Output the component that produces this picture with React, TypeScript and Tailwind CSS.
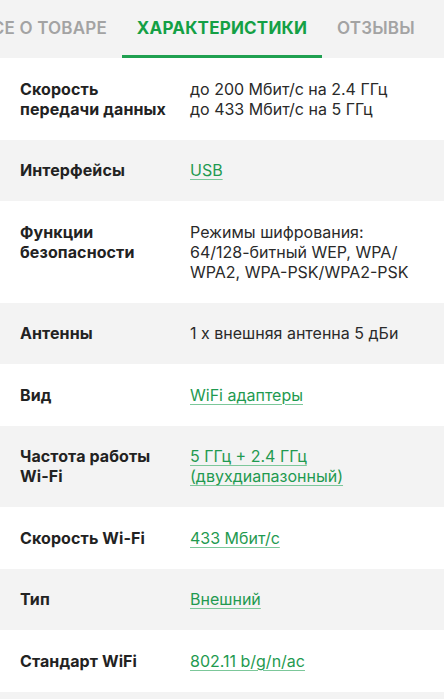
import React from "react";

type Row = { label: string[]; value: string[]; link?: boolean };

const rows: Row[] = [
  { label: ["Скорость", "передачи данных"], value: ["до 200 Мбит/с на 2.4 ГГц", "до 433 Мбит/с на 5 ГГц"] },
  { label: ["Интерфейсы"], value: ["USB"], link: true },
  { label: ["Функции", "безопасности"], value: ["Режимы шифрования:", "64/128-битный WEP, WPA/", "WPA2, WPA-PSK/WPA2-PSK"] },
  { label: ["Антенны"], value: ["1 x внешняя антенна 5 дБи"] },
  { label: ["Вид"], value: ["WiFi адаптеры"], link: true },
  { label: ["Частота работы", "Wi-Fi"], value: ["5 ГГц + 2.4 ГГц", "(двухдиапазонный)"], link: true },
  { label: ["Скорость Wi-Fi"], value: ["433 Мбит/с"], link: true },
  { label: ["Тип"], value: ["Внешний"], link: true },
  { label: ["Стандарт WiFi"], value: ["802.11 b/g/n/ac"], link: true },
  { label: [""], value: [""] },
];

export default function App() {
  return (
    <div
      className="w-[444px] h-[699px] overflow-hidden bg-white text-[#222]"
      style={{ fontFamily: "Inter, 'Noto Sans', sans-serif" }}
    >
      <div className="h-[58px] bg-[#f3f3f3] flex overflow-hidden text-[17px] uppercase font-semibold tracking-[0.2px]">
        <div className="w-[122px] shrink-0 flex justify-end items-center pr-[15px] whitespace-nowrap text-[#a3a3a3]">
          Все о товаре
        </div>
        <div className="w-[200px] shrink-0 flex items-center justify-center whitespace-nowrap text-[#14a045] font-bold border-b-[3px] border-[#1fa050] pt-[3px]">
          Характеристики
        </div>
        <div className="shrink-0 flex items-center pl-[15px] whitespace-nowrap text-[#a3a3a3]">
          Отзывы
        </div>
      </div>
      <div className="flex flex-col">
        {rows.map((r, i) => (
          <div
            key={i}
            className={`flex py-[20.75px] text-[16px] leading-[20px] ${i % 2 === 1 ? "bg-[#f3f3f3]" : "bg-white"}`}
          >
            <div className="w-[190px] shrink-0 pl-[20px] font-bold text-[#222] tracking-[0.1px]">
              {r.label.map((l, j) => (
                <div key={j}>{l || "\u00a0"}</div>
              ))}
            </div>
            <div className="flex-1 text-[#2a2a2a]">
              {r.value.map((v, j) => (
                <div key={j}>
                  {r.link ? (
                    <span className="text-[#1f9a50] underline decoration-[#7cc79a] decoration-1 underline-offset-[3px]">{v}</span>
                  ) : (
                    v || "\u00a0"
                  )}
                </div>
              ))}
            </div>
          </div>
        ))}
      </div>
    </div>
  );
}
